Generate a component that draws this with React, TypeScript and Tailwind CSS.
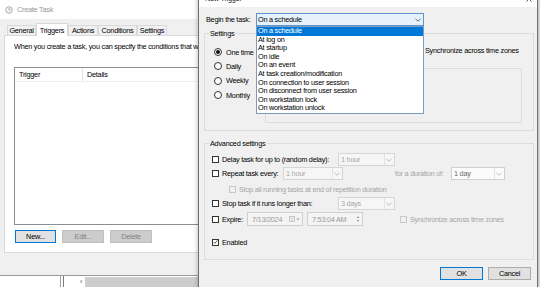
import React from 'react'

const TRIGGERS = [
  'On a schedule',
  'At log on',
  'At startup',
  'On idle',
  'On an event',
  'At task creation/modification',
  'On connection to user session',
  'On disconnect from user session',
  'On workstation lock',
  'On workstation unlock',
]

const TABS = [
  { name: 'General', w: 'w-[29px]' },
  { name: 'Triggers', w: 'w-[32px]', active: true },
  { name: 'Actions', w: 'w-[30px]' },
  { name: 'Conditions', w: 'w-[39px]' },
  { name: 'Settings', w: 'w-[30px]' },
]

function Chevron({ color = '#888' }: { color?: string }) {
  return (
    <svg width="6" height="4" viewBox="0 0 6 4">
      <path d="M0.5 0.8 L3 3.2 L5.5 0.8" fill="none" stroke={color} strokeWidth="0.8" />
    </svg>
  )
}

function Check({ checked = false, disabled = false }: { checked?: boolean; disabled?: boolean }) {
  return (
    <span
      className={`w-[7px] h-[7px] shrink-0 border flex items-center justify-center ${
        disabled ? 'border-[#c8c8c8] bg-[#f0f0f0]' : 'border-[#333] bg-white'
      }`}
    >
      {checked && (
        <svg width="6" height="6" viewBox="0 0 6 6">
          <path d="M0.6 3 L2.2 4.6 L5.4 1" fill="none" stroke="#222" strokeWidth="0.9" />
        </svg>
      )}
    </span>
  )
}

function Radio({ checked = false }: { checked?: boolean }) {
  return (
    <span className="w-[8px] h-[8px] shrink-0 rounded-full border border-[#333] bg-white flex items-center justify-center">
      {checked && <span className="w-[4px] h-[4px] rounded-full bg-[#111]" />}
    </span>
  )
}

function Combo({ value, w, tone = 'disabled' }: { value: string; w: string; tone?: 'disabled' | 'soft' }) {
  return (
    <div
      className={`${w} h-[13px] shrink-0 border flex items-center justify-between pl-[2px] pr-[2px] ${
        tone === 'disabled'
          ? 'bg-[#f6f6f6] border-[#d6d6d6] text-[#a8a8a8]'
          : 'bg-[#fbfbfb] border-[#cfcfcf] text-[#6a6a6a]'
      }`}
    >
      <span>{value}</span>
      <span className="border-l border-[#e2e2e2] pl-[1px] h-full flex items-center">
        <Chevron color="#b0b0b0" />
      </span>
    </div>
  )
}

export default function App() {
  return (
    <div className="relative w-[540px] h-[287px] overflow-hidden bg-[#e6ebf0] font-['Liberation_Sans',Arial,sans-serif] text-[7.3px] leading-[9px] tracking-[-0.25px] text-black">
      {/* Create Task (behind) */}
      <div className="h-[276px] w-[220px] bg-[#f0f0f0] border-b border-[#9a9a9a] flex flex-col">
        <div className="h-[19px] bg-white flex items-center gap-[4px] pl-[5px] text-[#9a9a9a] shrink-0">
          <svg width="8" height="8" viewBox="0 0 8 8">
            <circle cx="4" cy="4" r="3.3" fill="#f4f4f4" stroke="#a8a8a8" strokeWidth="0.9" />
            <path d="M4 2 V4 H5.6" fill="none" stroke="#a0a0a0" strokeWidth="0.8" />
          </svg>
          <span>Create Task</span>
        </div>
        <div className="h-[16px] flex items-end pl-[7px] shrink-0">
          {TABS.map(t => (
            <div
              key={t.name}
              className={`${t.w} flex items-center justify-center border-t border-l border-r border-[#d9d9d9] ${
                t.active ? 'h-[13px] bg-white relative z-10 -mb-[1px]' : 'h-[10px] bg-[#f0f0f0]'
              }`}
            >
              {t.name}
            </div>
          ))}
        </div>
        <div className="ml-[4px] bg-white border border-[#d9d9d9] pt-[6px] pl-[9px] pb-[9px]">
          <div className="h-[9px] whitespace-nowrap overflow-hidden">
            When you create a task, you can specify the conditions that will trigger the task.
          </div>
          <div className="mt-[16px] h-[158px] border border-[#8a8f96] bg-white">
            <div className="h-[14px] flex items-center border-b border-[#f0f0f0]">
              <div className="w-[68px] pl-[4px] border-r border-[#e2e2e2] h-full flex items-center">Trigger</div>
              <div className="pl-[4px]">Details</div>
            </div>
          </div>
          <div className="mt-[5px] ml-[1px] flex gap-[6px]">
            <div className="w-[41px] h-[13px] border border-[#0078d7] bg-[#e1e1e1] flex items-center justify-center">New...</div>
            <div className="w-[42px] h-[13px] border border-[#bfbfbf] bg-[#cccccc] text-[#838383] flex items-center justify-center">Edit...</div>
            <div className="w-[42px] h-[13px] border border-[#bfbfbf] bg-[#cccccc] text-[#838383] flex items-center justify-center">Delete</div>
          </div>
        </div>
      </div>

      {/* window behind, bottom strip */}
      <div className="h-[11px] w-[220px] flex bg-white">
        <div className="w-[61px] border-r border-[#a0a0a0]" />
        <div className="w-[3px] border-r border-[#7a7a7a]" />
        <div className="w-[16px]" />
        <span className="text-[#555] leading-[11px]">‹</span>
        <div className="flex-1 ml-[3px] mt-[1px] bg-[#cdcdcd]" />
      </div>

      {/* New Trigger dialog */}
      <div className="absolute left-[198px] top-[-10px] w-[340px] h-[300px] border-x border-[#6f6f6f] bg-[#f0f0f0] shadow-[0_0_5px_rgba(0,0,0,0.3)] flex flex-col">
        <div className="h-[17px] shrink-0 bg-white flex items-center justify-between pl-[6px] pr-[5px]">
          <span className="text-[#222]">New Trigger</span>
          <svg width="6" height="6" viewBox="0 0 6 6">
            <path d="M0.5 0.5 L5.5 5.5 M5.5 0.5 L0.5 5.5" stroke="#333" strokeWidth="0.8" />
          </svg>
        </div>

        {/* Begin the task */}
        <div className="mt-[6px] pl-[7px] flex items-center h-[13px]">
          <div className="w-[50px]">Begin the task:</div>
          <div className="relative w-[168px] h-[13px]">
            <div className="h-full border border-[#5f95cc] bg-[#e5f1fb] flex items-center justify-between pl-[1px] pr-[2px]">
              <span>On a schedule</span>
              <Chevron color="#444" />
            </div>
            <div className="absolute left-0 top-full w-full z-10 border border-[#7d9bbd] bg-white">
              {TRIGGERS.map((t, i) => (
                <div
                  key={t}
                  className={`h-[8.6px] leading-[8.6px] pl-[1px] whitespace-nowrap ${i === 0 ? 'bg-[#0078d7] text-white' : ''}`}
                >
                  {t}
                </div>
              ))}
            </div>
          </div>
        </div>

        {/* Settings group */}
        <div className="mt-[7px] ml-[5px] w-[330px] border border-[#dcdcdc] pb-[7px]">
          <div className="-mt-[5px] ml-[4px] px-[1px] w-fit h-[9px] bg-[#f0f0f0]">Settings</div>
          <div className="flex mt-[7px]">
            <div className="w-[60px] pl-[9px] flex flex-col">
              {['One time', 'Daily', 'Weekly', 'Monthly'].map((r, i) => (
                <div key={r} className="h-[14.3px] flex items-center gap-[4px] whitespace-nowrap">
                  <Radio checked={i === 0} />
                  <span>{r}</span>
                </div>
              ))}
            </div>
            <div className="flex flex-col">
              <div className="h-[10px] flex items-center gap-[3px] ml-[150px] whitespace-nowrap">
                <Check />
                <span>Synchronize across time zones</span>
              </div>
              <div className="mt-[13px] w-[257px] h-[55px] border border-[#dcdcdc]" />
            </div>
          </div>
        </div>

        {/* Advanced settings group */}
        <div className="mt-[12px] ml-[5px] w-[330px] border border-[#dcdcdc] pb-[12px] whitespace-nowrap">
          <div className="-mt-[5px] ml-[4px] px-[1px] w-fit h-[9px] bg-[#f0f0f0]">Advanced settings</div>

          <div className="mt-[5px] h-[13px] pl-[7px] flex items-center">
            <Check />
            <span className="ml-[3px] w-[116px]">Delay task for up to (random delay):</span>
            <Combo value="1 hour" w="w-[57px]" />
          </div>

          <div className="mt-[1px] h-[13px] pl-[7px] flex items-center">
            <Check />
            <span className="ml-[3px] w-[61px]">Repeat task every:</span>
            <Combo value="1 hour" w="w-[60px]" />
            <span className="ml-[52px] w-[56px] text-[#a6a6a6]">for a duration of:</span>
            <Combo value="1 day" w="w-[54px]" tone="soft" />
          </div>

          <div className="mt-[4px] h-[10px] pl-[24px] flex items-center gap-[3px] text-[#a6a6a6]">
            <Check disabled />
            <span>Stop all running tasks at end of repetition duration</span>
          </div>

          <div className="mt-[3px] h-[13px] pl-[7px] flex items-center">
            <Check />
            <span className="ml-[3px] w-[116px]">Stop task if it runs longer than:</span>
            <Combo value="3 days" w="w-[57px]" />
          </div>

          <div className="mt-[2px] h-[14px] pl-[7px] flex items-center">
            <Check />
            <span className="ml-[3px] w-[25px]">Expire:</span>
            <div className="w-[56px] h-[14px] border border-[#d0d0d0] bg-[#f4f4f4] text-[#9a9a9a] flex items-center justify-between pl-[4px] pr-[2px]">
              <span>7/13/2024</span>
              <span className="flex items-center gap-[1px]">
                <svg width="6" height="6" viewBox="0 0 6 6">
                  <rect x="0.5" y="0.5" width="5" height="5" fill="none" stroke="#b5b5b5" strokeWidth="0.7" />
                  <path d="M0.5 2 H5.5 M2.2 2 V5.5 M3.8 2 V5.5" stroke="#c5c5c5" strokeWidth="0.5" />
                </svg>
                <svg width="4" height="3" viewBox="0 0 4 3">
                  <path d="M0 0.5 L2 2.5 L4 0.5 Z" fill="#b0b0b0" />
                </svg>
              </span>
            </div>
            <div className="ml-[4px] w-[56px] h-[14px] border border-[#d0d0d0] bg-[#f4f4f4] text-[#9a9a9a] flex items-center justify-between pl-[4px] pr-[2px]">
              <span>7:53:04 AM</span>
              <svg width="4" height="8" viewBox="0 0 4 8">
                <path d="M0.5 3 L2 1.3 L3.5 3 Z M0.5 5 L2 6.7 L3.5 5 Z" fill="#9c9c9c" />
              </svg>
            </div>
            <span className="ml-[37px] flex items-center gap-[3px] text-[#a6a6a6]">
              <Check disabled />
              <span>Synchronize across time zones</span>
            </span>
          </div>

          <div className="mt-[11px] h-[10px] pl-[7px] flex items-center gap-[3px]">
            <Check checked />
            <span>Enabled</span>
          </div>
        </div>

        {/* OK / Cancel */}
        <div className="mt-[7px] pr-[6px] flex justify-end gap-[5px]">
          <div className="w-[43px] h-[13px] border border-[#0078d7] bg-[#e1e1e1] flex items-center justify-center">OK</div>
          <div className="w-[43px] h-[13px] border border-[#adadad] bg-[#e1e1e1] flex items-center justify-center">Cancel</div>
        </div>
      </div>

      {/* mouse pointer */}
      <svg className="absolute left-[349px] top-[31px]" width="8" height="12" viewBox="0 0 8 12">
        <path d="M0.5 0.5 L0.5 9.5 L2.6 7.6 L4 10.9 L5.4 10.3 L4 7.1 L6.9 7.1 Z" fill="white" stroke="#111" strokeWidth="0.7" strokeLinejoin="round" />
      </svg>
    </div>
  )
}
